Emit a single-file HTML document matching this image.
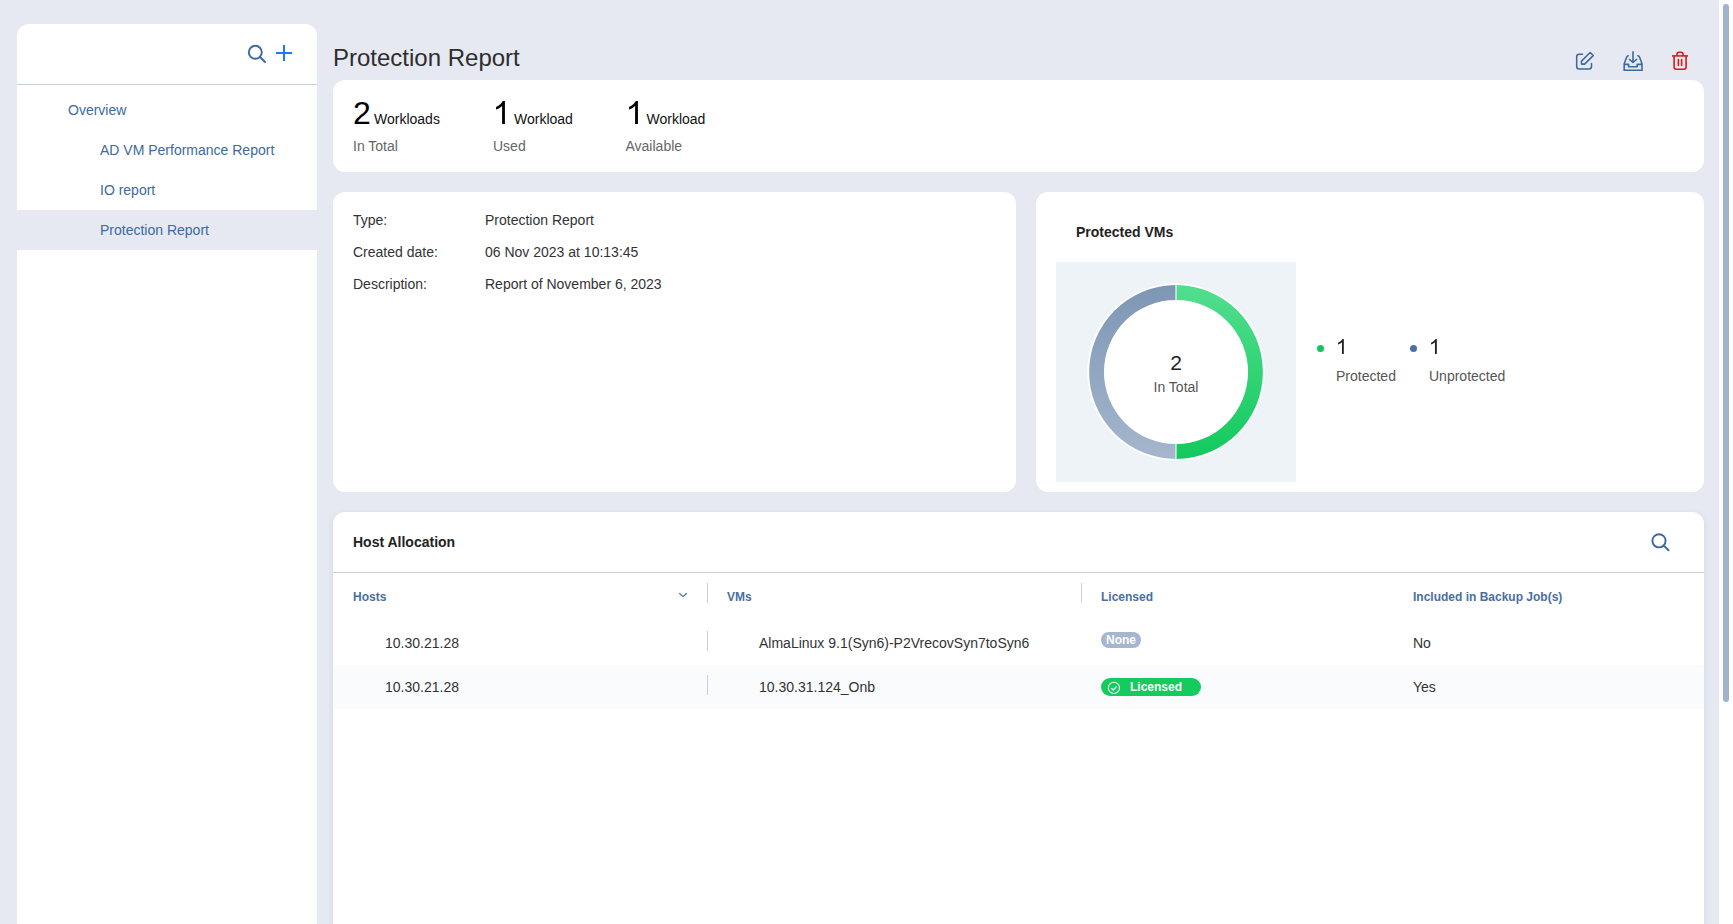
<!DOCTYPE html>
<html><head><meta charset="utf-8">
<style>
*{box-sizing:border-box;margin:0;padding:0}
html,body{width:1733px;height:924px;overflow:hidden}
body{background:#e6e9f1;font-family:"Liberation Sans",sans-serif;color:#222;position:relative}
.abs{position:absolute}
.card{position:absolute;background:#fff;border-radius:12px}
.side{left:17px;top:24px;width:300px;height:920px;border-radius:12px 12px 0 0}
.side .hdr{position:absolute;left:0;top:0;width:300px;height:61px;border-bottom:1px solid #c6d1df}
.nav{position:absolute;left:0;width:300px;height:40px;line-height:40px;font-size:14px;color:#3d6a9e;white-space:nowrap}
.nav.sel{background:#e6e9f1}
.title{left:333px;top:42px;font-size:24px;color:#2e2e2e;white-space:nowrap;line-height:32px}
.stats{left:333px;top:80px;width:1371px;height:92px}
.stat{position:absolute;top:0;white-space:nowrap}
.stat .big{position:absolute;left:0;top:92px;font-size:32px;color:#000}
.info{left:333px;top:192px;width:683px;height:300px}
.chart{left:1036px;top:192px;width:668px;height:300px}
.tbl{left:333px;top:512px;width:1371px;height:430px;box-shadow:0 2px 6px rgba(90,100,140,.13)}
.sb{left:1719px;top:0;width:14px;height:924px;background:#fff}
.thumb{left:1723px;top:4px;width:6px;height:698px;background:#a0b3cc;border-radius:3px}
.t14{font-size:14px;white-space:nowrap;position:absolute}
.grey{color:#666}
.lh1{line-height:1}
.dk{color:#333}
.dot{width:7px;height:7px;border-radius:50%}
.th{position:absolute;font-size:12px;line-height:1;font-weight:bold;color:#4a6fa0;white-space:nowrap}
.vd{position:absolute;width:1px;height:20px;background:#c6d1df}
.badge{font-size:12px;font-weight:bold;color:#fff;border-radius:9px;text-align:center;line-height:16px;white-space:nowrap}
</style></head>
<body>
<!-- sidebar -->
<div class="card side">
  <div class="hdr">
    <svg class="abs" style="left:228px;top:18px" width="22" height="22" viewBox="0 0 22 22">
      <circle cx="10.3" cy="10.3" r="6.5" fill="none" stroke="#3d6a9e" stroke-width="1.9"/>
      <line x1="15" y1="15" x2="20" y2="20" stroke="#3d6a9e" stroke-width="2" stroke-linecap="round"/>
    </svg>
    <svg class="abs" style="left:257px;top:19px" width="20" height="20" viewBox="0 0 20 20">
      <line x1="2" y1="10" x2="18" y2="10" stroke="#1a7af8" stroke-width="2"/>
      <line x1="10" y1="2" x2="10" y2="18" stroke="#1a7af8" stroke-width="2"/>
    </svg>
  </div>
  <div class="nav" style="top:66px;padding-left:51px">Overview</div>
  <div class="nav" style="top:106px;padding-left:83px">AD VM Performance Report</div>
  <div class="nav" style="top:146px;padding-left:83px">IO report</div>
  <div class="nav sel" style="top:186px;padding-left:83px">Protection Report</div>
</div>

<div class="abs title">Protection Report</div>
<svg class="abs" style="left:1574px;top:50px" width="22" height="22" viewBox="0 0 22 22">
  <path d="M8.5 4.2 H5.2 Q2.7 4.2 2.7 6.7 V16.5 Q2.7 19 5.2 19 H15 Q17.5 19 17.5 16.5 V13.6" fill="none" stroke="#3d6a9e" stroke-width="1.55" stroke-linecap="round"/>
  <path d="M7.5 14.1 V11.1 L16.1 2.5 L19.2 5.6 L10.6 14.1 Z" fill="none" stroke="#3d6a9e" stroke-width="1.55" stroke-linejoin="round"/>
</svg>
<svg class="abs" style="left:1622px;top:50px" width="22" height="22" viewBox="0 0 22 22">
  <path d="M6.4 5.7 Q5.1 5.7 4.7 7 L2.2 13.8 V20.2 H20 V13.8 L17.5 7 Q17.1 5.7 15.8 5.7" fill="none" stroke="#3d6a9e" stroke-width="1.6" stroke-linecap="round" stroke-linejoin="miter"/>
  <path d="M2.2 14.4 H6.6 V16.7 H15.2 V14.4 H20" fill="none" stroke="#3d6a9e" stroke-width="1.6" stroke-linejoin="round"/>
  <path d="M11 1.2 V12.3 M7 9 L11 12.5 L15 9" fill="none" stroke="#3d6a9e" stroke-width="1.6" stroke-linejoin="round"/>
</svg>
<svg class="abs" style="left:1670px;top:50px" width="20" height="22" viewBox="0 0 20 22">
  <path d="M2 5.9 H18" stroke="#dd1a1a" stroke-width="1.6"/>
  <path d="M6.9 5.9 V4.5 Q6.9 2.3 9.1 2.3 H10.9 Q13.1 2.3 13.1 4.5 V5.9" fill="none" stroke="#dd1a1a" stroke-width="1.6"/>
  <path d="M4.1 5.9 V17.1 Q4.1 19.3 6.3 19.3 H13.9 Q16.1 19.3 16.1 17.1 V5.9" fill="none" stroke="#dd1a1a" stroke-width="1.6"/>
  <path d="M8.4 9.6 V15.4 M11.6 9.6 V15.4" stroke="#dd1a1a" stroke-width="1.6" stroke-linecap="round"/>
</svg>


<!-- stats card -->
<div class="card stats">
  <div class="t14 lh1" style="left:20px;top:17px;font-size:32px;color:#000">2</div>
  <div class="t14 lh1" style="left:41px;top:32px;color:#111">Workloads</div>
  <div class="t14 lh1 grey" style="left:20px;top:59px">In Total</div>
  <svg class="abs" style="left:160px;top:12px" width="19.2" height="32" viewBox="0 0 19.2 32"><path transform="translate(0 32) scale(0.015625 -0.015625)" d="M763 0 L583 0 L583 1147 Q518 1085 412 1023 Q306 961 196 922 L196 1096 Q352 1168 467 1270 Q582 1372 630 1466 L763 1466 Z" fill="#000"/></svg>
  <div class="t14 lh1" style="left:181px;top:32px;color:#111">Workload</div>
  <div class="t14 lh1 grey" style="left:160px;top:59px">Used</div>
  <svg class="abs" style="left:292.5px;top:12px" width="19.2" height="32" viewBox="0 0 19.2 32"><path transform="translate(0 32) scale(0.015625 -0.015625)" d="M763 0 L583 0 L583 1147 Q518 1085 412 1023 Q306 961 196 922 L196 1096 Q352 1168 467 1270 Q582 1372 630 1466 L763 1466 Z" fill="#000"/></svg>
  <div class="t14 lh1" style="left:313.5px;top:32px;color:#111">Workload</div>
  <div class="t14 lh1 grey" style="left:292.5px;top:59px">Available</div>
</div>

<div class="card info">
  <div class="t14 lh1 dk" style="left:20px;top:21px">Type:</div>
  <div class="t14 lh1 dk" style="left:152px;top:21px">Protection Report</div>
  <div class="t14 lh1 dk" style="left:20px;top:53px">Created date:</div>
  <div class="t14 lh1 dk" style="left:152px;top:53px">06 Nov 2023 at 10:13:45</div>
  <div class="t14 lh1 dk" style="left:20px;top:85px">Description:</div>
  <div class="t14 lh1 dk" style="left:152px;top:85px">Report of November 6, 2023</div>
</div>
<div class="card chart">
  <div class="t14 lh1 dk" style="left:40px;top:33px;font-weight:bold;color:#222">Protected VMs</div>
  <div class="abs" style="left:20px;top:70px;width:240px;height:220px;background:#eef3f8"></div>
  <svg class="abs" style="left:20px;top:70px" width="240" height="220" viewBox="0 0 240 220">
    <defs>
      <linearGradient id="gg" x1="0" y1="0" x2="0" y2="1">
        <stop offset="0" stop-color="#52de8f"/><stop offset="1" stop-color="#12c95d"/>
      </linearGradient>
      <linearGradient id="gr" x1="0" y1="0" x2="0" y2="1">
        <stop offset="0" stop-color="#7d96b5"/><stop offset="1" stop-color="#a5b6cd"/>
      </linearGradient>
    </defs>
    <circle cx="120" cy="110" r="88.8" fill="#fff"/>
    <path d="M120 23.1 A86.9 86.9 0 0 1 120 196.9 L120 182.1 A72.1 72.1 0 0 0 120 37.9 Z" fill="url(#gg)"/>
    <path d="M120 196.9 A86.9 86.9 0 0 1 120 23.1 L120 37.9 A72.1 72.1 0 0 0 120 182.1 Z" fill="url(#gr)"/>
    <line x1="120" y1="21" x2="120" y2="39" stroke="#fff" stroke-width="1.1"/>
    <line x1="120" y1="181" x2="120" y2="199" stroke="#fff" stroke-width="1.1"/>
  </svg>
  <div class="t14 lh1 dk" style="left:20px;top:160.2px;width:240px;text-align:center;font-size:21px;color:#222">2</div>
  <div class="t14 lh1 grey" style="left:20px;top:187.5px;width:240px;text-align:center;color:#555">In Total</div>
  <div class="abs dot" style="left:280.8px;top:152.5px;background:#14c35f"></div>
  <svg class="abs" style="left:300px;top:140.8px" width="12.6" height="21" viewBox="0 0 12.6 21"><path transform="translate(0 21) scale(0.010254 -0.010254)" d="M763 0 L583 0 L583 1147 Q518 1085 412 1023 Q306 961 196 922 L196 1096 Q352 1168 467 1270 Q582 1372 630 1466 L763 1466 Z" fill="#222"/></svg>
  <div class="t14 lh1 grey" style="left:300px;top:177.2px;color:#555">Protected</div>
  <div class="abs dot" style="left:373.5px;top:152.5px;background:#4a6fa0"></div>
  <svg class="abs" style="left:393px;top:140.8px" width="12.6" height="21" viewBox="0 0 12.6 21"><path transform="translate(0 21) scale(0.010254 -0.010254)" d="M763 0 L583 0 L583 1147 Q518 1085 412 1023 Q306 961 196 922 L196 1096 Q352 1168 467 1270 Q582 1372 630 1466 L763 1466 Z" fill="#222"/></svg>
  <div class="t14 lh1 grey" style="left:393px;top:177.2px;color:#555">Unprotected</div>
</div>
<div class="card tbl">
  <div class="t14 lh1" style="left:20px;top:23.3px;font-weight:bold;color:#222">Host Allocation</div>
  <svg class="abs" style="left:1314.5px;top:18px" width="24" height="24" viewBox="0 0 24 24">
    <circle cx="11" cy="10.8" r="6.6" fill="none" stroke="#3d6a9e" stroke-width="1.9"/>
    <line x1="15.8" y1="15.6" x2="20.5" y2="20.3" stroke="#3d6a9e" stroke-width="2" stroke-linecap="round"/>
  </svg>
  <div class="abs" style="left:0;top:60px;width:1371px;height:1px;background:#c6d1df"></div>
  <div class="th" style="left:20px;top:79px">Hosts</div>
  <svg class="abs" style="left:344px;top:78px" width="12" height="10" viewBox="0 0 12 10">
    <path d="M2.3 3.3 L6 6.6 L9.7 3.3" fill="none" stroke="#3d6a9e" stroke-width="1.15"/>
  </svg>
  <div class="vd" style="left:374px;top:71px"></div>
  <div class="th" style="left:394px;top:79px">VMs</div>
  <div class="vd" style="left:748px;top:71px"></div>
  <div class="th" style="left:768px;top:79px">Licensed</div>
  <div class="th" style="left:1080px;top:79px">Included in Backup Job(s)</div>

  <div class="abs" style="left:0;top:153px;width:1371px;height:44px;background:#fafbfd"></div>

  <div class="t14 lh1 dk" style="left:52px;top:124px">10.30.21.28</div>
  <div class="vd" style="left:374px;top:119px"></div>
  <div class="t14 lh1 dk" style="left:426px;top:124px">AlmaLinux 9.1(Syn6)-P2VrecovSyn7toSyn6</div>
  <div class="abs badge" style="left:768px;top:120px;width:40px;height:16px;background:#a6b6cd">None</div>
  <div class="t14 lh1 dk" style="left:1080px;top:124px">No</div>

  <div class="t14 lh1 dk" style="left:52px;top:168px">10.30.21.28</div>
  <div class="vd" style="left:374px;top:163px"></div>
  <div class="t14 lh1 dk" style="left:426px;top:168px">10.30.31.124_Onb</div>
  <div class="abs badge" style="left:768px;top:166px;width:100px;height:18px;line-height:18.5px;background:#14cb5e;text-align:left;padding-left:29px">Licensed
    <svg class="abs" style="left:6px;top:2.5px" width="14" height="14" viewBox="0 0 14 14"><circle cx="6.9" cy="6.9" r="5.6" fill="none" stroke="#fff" stroke-width="1.1"/><path d="M4.2 7.1 L6.2 9 L9.6 5.6" fill="none" stroke="#fff" stroke-width="1.3"/></svg>
  </div>
  <div class="t14 lh1 dk" style="left:1080px;top:168px">Yes</div>
</div>

<div class="abs sb"></div>
<div class="abs thumb"></div>
</body></html>
